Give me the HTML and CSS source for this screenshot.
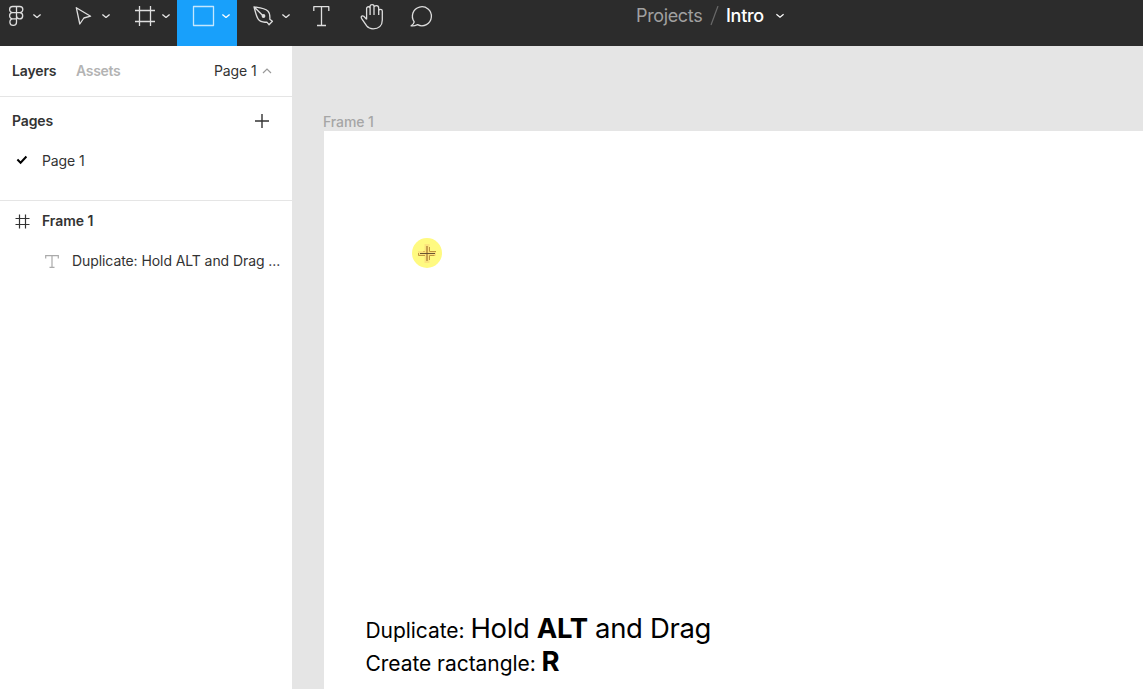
FILE: index.html
```html
<!DOCTYPE html>
<html lang="en">
<head>
<meta charset="utf-8">
<title>Intro</title>
<link rel="stylesheet" href="styles.css">
</head>
<body>
<div class="app">
  <header class="toolbar">
    <nav class="tools">
      <button class="tool menu" aria-label="Menu"><svg viewBox="0 0 57 32"><path d="M16.5 6.5h-3.8a3.1 3.1 0 0 0 0 6.2h3.8zM16.5 6.5h3.2a3.1 3.1 0 0 1 0 6.2h-3.2M16.5 12.7h-3.8a3.1 3.1 0 0 0 0 6.2h3.8zM16.5 12.7h3.2a3.1 3.1 0 1 1-3.2 3.1M16.5 18.9v3.3a3.3 3.3 0 1 1-3.8-3.3"/><path class="chevron" d="m33.4 14.4 3.6 3 3.6-3"/></svg></button>
      <button class="tool" aria-label="Move"><svg viewBox="57 0 60 32"><path d="m76.3 7.7 14.3 8.5-6.700 1.800-4.100 6z"/><path class="chevron" d="m102.4 14.4 3.6 3 3.6-3"/></svg></button>
      <button class="tool" aria-label="Frame"><svg viewBox="117 0 60 32"><path d="M139.5 6v20M150.5 6v20M135 10.5h20M135 21.5h20"/><path class="chevron" d="m162.4 14.4 3.6 3 3.6-3"/></svg></button>
      <button class="tool active" aria-label="Rectangle"><svg viewBox="177 0 60 32"><path d="M193.5 6.5h20v19h-20z"/><path class="chevron" d="m222.4 14.4 3.6 3 3.6-3"/></svg></button>
      <button class="tool" aria-label="Pen"><svg viewBox="237 0 60 32"><path d="M254 6.8c5.5.9 10.8 1.4 13.8 4.1 2.5 2.3 2.2 5.5 2 8.3l2.6 2-3.4 3.5-2.1-2.6c-3.3.4-6.7-.1-8.7-2.9C256.300 16.500 255.400 11.900 254 6.800zM254 6.800l9 9"/><circle class="dot" cx="263.500" cy="16" r="1.900"/><path class="chevron" d="m282.400 14.400 3.600 3 3.600-3"/></svg></button>
      <button class="tool single" aria-label="Text"><svg viewBox="297 0 49 32"><path d="M313.800 11V6.700h15V11M321.500 6.700v18.800M317 25.500h9"/></svg></button>
      <button class="tool hand" aria-label="Hand"><svg viewBox="346 0 50 32"><path d="m366.600 19.400-2.800-3.100c-1.900-1.300-3.200.6-2.300 2l5.200 7.600c1.600 2.100 3.700 2.900 6.400 2.900 5.600 0 9.200-3.200 9.200-8.800v-9c0-2.300-3.600-2.300-3.600 0v4M366.600 19.400V8.500c0-2.300 3.500-2.300 3.500 0V15M370.100 8.500V6.200c0-2.200 3.900-2.200 3.900 0V15M374 7.300c0-2.200 4.700-2.200 4.700.6V15"/></svg></button>
      <button class="tool hand" aria-label="Comment"><svg viewBox="396 0 50 32"><path d="M414.200 21.800a9.500 9.500 0 1 1 3.400 2.900c-2 .9-4.300 1.600-6.500 1.100 1.600-1 2.800-2.300 3.100-4z"/></svg></button>
    </nav>
    <div class="crumbs"><span class="project">Projects</span><svg class="slash" viewBox="0 0 9 20"><path d="M8 0 1 19"/></svg><span class="file">Intro</span><svg class="file-arrow" viewBox="0 0 10 6"><path d="m1.400 1.200 3.600 3 3.600-3"/></svg></div>
  </header>
  <div class="workspace">
    <aside class="sidebar">
      <div class="tabs"><span class="tab">Layers</span><span class="tab muted">Assets</span><span class="current">Page 1</span><svg class="up" viewBox="0 0 10 6"><path d="m1 5 4-4 4 4"/></svg></div>
      <section class="pages">
        <div class="row heading"><span>Pages</span><svg class="plus" viewBox="0 0 14 14"><path d="M7 0v14M0 7h14"/></svg></div>
        <div class="row page"><svg class="check" viewBox="0 0 12 10"><path d="m1.400 4.500 3.200 3.200L10.400 1.500"/></svg><span>Page 1</span></div>
      </section>
      <section class="layers">
        <div class="row frame-row"><svg class="grid" viewBox="0 0 15 15"><path d="M4.500 .5v14M10.500 .5v14M.5 4.500h14M.5 10.500h14"/></svg><span>Frame 1</span></div>
        <div class="row text-row"><svg class="type" viewBox="0 0 14 13"><path d="M.700 3.500V.700h12.600v2.800M7 .700v11.600M4.500 12.300h5"/></svg><span>Duplicate: Hold ALT and Drag ...</span></div>
      </section>
    </aside>
    <main class="canvas">
      <div class="frame-name">Frame 1</div>
      <div class="frame">
        <svg class="cursor" viewBox="0 0 30 30"><circle cx="15" cy="15" r="15"/><path class="cursor-edge" d="M15 6v19M6 15.500h18"/><path class="cursor-line" d="M17.500 9v4.500h6.500M12.500 13.500h-1M6.500 15v2.500h6.500M17.500 22v-4.500h5"/><path class="cursor-bar" d="M15 8v15"/><path class="cursor-core" d="M8 15.500h15"/></svg>
        <div class="notes">
          <p><span class="label">Duplicate: </span><span class="keys">Hold <b>ALT</b> and Drag</span></p>
          <p><span class="label">Create ractangle: </span><b>R</b></p>
        </div>
      </div>
    </main>
  </div>
</div>
</body>
</html>
```
FILE: styles.css
```css
* { box-sizing: border-box; }
body { margin: 0; font-family: Inter, sans-serif; overflow: hidden; }
svg { display: block; fill: none; flex: none; }
.app { width: 1143px; height: 689px; display: flex; flex-direction: column; overflow: hidden; }
.toolbar { height: 46px; flex: none; display: flex; background: #2c2c2c; }
.tools { display: flex; width: 636px; flex: none; }
.tool { width: 60px; height: 46px; padding: 0; border: 0; background: none; display: flex; align-items: flex-start; }
.tool svg { width: 100%; height: 32px; stroke: #dedede; stroke-width: 1.3; stroke-linejoin: round; }
.tool .chevron { stroke: #e8e8e8; stroke-width: 1.3; }
.tool .dot { fill: #dedede; stroke: none; }
.tool.menu { width: 57px; }
.tool.single { width: 49px; }
.tool.hand { width: 50px; }
.tool.active { background: #18a0fb; }
.tool.active svg { stroke: #c4e7fd; }
.tool.active .chevron { stroke: #fff; }
.crumbs { display: flex; align-items: center; height: 32px; font-size: 18px; white-space: nowrap; }
.crumbs span { padding-bottom: 1px; }
.project { width: 74px; color: #a0a0a0; letter-spacing: -0.35px; }
.slash { width: 9px; height: 20px; margin-right: 7px; stroke: #696969; stroke-width: 1.2; }
.file { width: 49px; color: #fff; font-weight: 500; letter-spacing: -0.3px; }
.file-arrow { width: 10px; height: 6px; stroke: #fff; stroke-width: 1.2; }
.workspace { flex: 1; min-height: 0; display: flex; }
.sidebar { width: 293px; flex: none; background: #fff; border-right: 1px solid #e5e5e5; color: #333; font-size: 14px; }
.sidebar span { padding-bottom: 1px; }
.tabs { height: 51px; display: flex; align-items: center; padding-left: 12px; border-bottom: 1px solid #e5e5e5; }
.tab { width: 64px; font-weight: 600; letter-spacing: -0.15px; }
.tab.muted { width: 138px; color: #b3b3b3; letter-spacing: -0.3px; }
.current { width: 48px; letter-spacing: -0.1px; white-space: nowrap; }
.up { width: 10px; height: 6px; stroke: #999; stroke-width: 1.2; }
.row { display: flex; align-items: center; height: 40px; }
.pages { height: 104px; padding-top: 4px; border-bottom: 1px solid #e5e5e5; }
.heading { padding: 0 23px 0 12px; justify-content: space-between; font-weight: 600; letter-spacing: -0.15px; }
.plus { width: 14px; height: 14px; stroke: #333; stroke-width: 1.4; }
.page { padding-left: 16px; letter-spacing: -0.1px; }
.check { width: 12px; height: 10px; margin: 0 14px 2px 0; stroke: #000; stroke-width: 2; }
.frame-row { padding-left: 15px; font-weight: 600; letter-spacing: -0.05px; }
.grid { width: 15px; height: 15px; margin: 1px 12px 0 0; stroke: #333; stroke-width: 1.2; }
.text-row { padding-left: 45px; white-space: nowrap; letter-spacing: -0.08px; }
.type { width: 14px; height: 13px; margin-right: 13px; stroke: #aaa; stroke-width: 1.2; }
.canvas { flex: 1; min-width: 0; padding: 67px 0 0 30px; display: flex; flex-direction: column; background: #e5e5e5; }
.frame-name { height: 18px; line-height: 17px; flex: none; color: #a6a6a6; font-size: 14px; font-weight: 500; letter-spacing: -0.1px; }
.frame { flex: 1; position: relative; background: #fff; margin-left: 1px; padding: 481px 0 0 41.500px; }
.cursor { position: absolute; left: 88px; top: 107px; width: 30px; height: 30px; }
.cursor circle { fill: #fffa81; }
.cursor-edge { stroke: #fbe37c; stroke-width: 5; }
.cursor-line { stroke: #c0983f; stroke-width: 1; }
.cursor-bar { stroke: #c6a04e; stroke-width: 2; }
.cursor-core { stroke: #685433; stroke-width: 1; }
.notes { color: #000; font-size: 27.500px; letter-spacing: -0.350px; }
.notes p { margin: 0; height: 33px; line-height: 33px; white-space: pre; }
.label { font-size: 21px; letter-spacing: -0.050px; }
.notes b { font-weight: 700; }
```
